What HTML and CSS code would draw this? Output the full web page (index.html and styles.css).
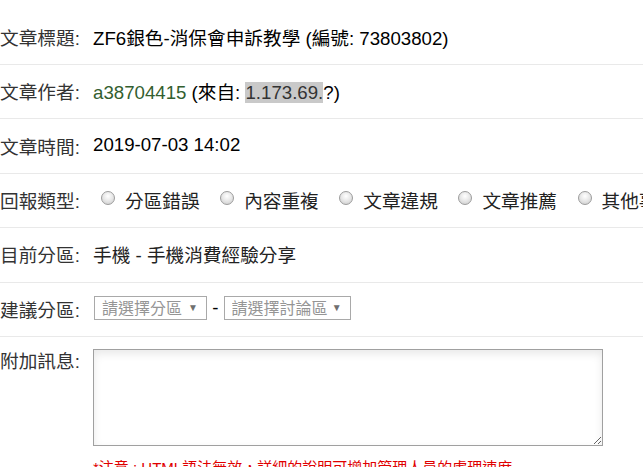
FILE: index.html
```html
<!DOCTYPE html>
<html lang="zh-Hant">
<head>
<meta charset="utf-8">
<title>檢舉文章</title>
<link rel="stylesheet" href="styles.css">
</head>
<body>
<div class="form">
  <div class="row">
    <span class="label">文章標題:</span>
    <span class="value title">ZF6銀色-消保會申訴教學 (編號: 73803802)</span>
  </div>
  <div class="row">
    <span class="label">文章作者:</span>
    <span class="value"><span class="author">a38704415</span> (來自: <span class="ip">1.173.69.</span>?)</span>
  </div>
  <div class="row">
    <span class="label">文章時間:</span>
    <span class="value">2019-07-03 14:02</span>
  </div>
  <div class="row">
    <span class="label">回報類型:</span>
    <span class="options">
      <label class="opt"><input type="radio" name="type"><span>分區錯誤</span></label>
      <label class="opt"><input type="radio" name="type"><span>內容重複</span></label>
      <label class="opt"><input type="radio" name="type"><span>文章違規</span></label>
      <label class="opt"><input type="radio" name="type"><span>文章推薦</span></label>
      <label class="opt"><input type="radio" name="type"><span>其他事項</span></label>
    </span>
  </div>
  <div class="row">
    <span class="label">目前分區:</span>
    <span class="value dim">手機 - 手機消費經驗分享</span>
  </div>
  <div class="row">
    <span class="label">建議分區:</span>
    <span class="value selects"><span class="sel"><select class="sel-board"><option>請選擇分區</option></select></span> - <span class="sel"><select class="sel-forum"><option>請選擇討論區</option></select></span></span>
  </div>
  <div class="row row-msg">
    <span class="label">附加訊息:</span>
    <div class="msg">
      <textarea class="msg-box"></textarea>
      <p class="note">*注意 : HTML語法無效，詳細的說明可增加管理人員的處理速度</p>
    </div>
  </div>
</div>
</body>
</html>
```

FILE: styles.css
```css
html {
  overflow: hidden;
}

body {
  margin: 0;
  background: #fff;
  color: #000;
  font-family: "Liberation Sans", "Noto Sans CJK TC", sans-serif;
  font-size: 14pt;
}

.form {
  padding-top: 10.6px;
}

.row {
  display: flex;
  align-items: center;
  height: 53.4px;
  border-bottom: 1px solid #e9e9e9;
  white-space: nowrap;
  overflow: hidden;
}

.label {
  flex: 0 0 93px;
  color: #333;
  margin-top: -2px;
}

.value {
  color: #000;
  margin-top: -2px;
}

.value.dim {
  color: #222;
}

.author {
  color: #335e2f;
}

.ip {
  background: #c9c9c9;
  color: #333;
}

.options {
  display: flex;
  align-items: center;
  margin-top: -2px;
}

.opt {
  display: inline-flex;
  align-items: center;
  margin-right: 12.5px;
  color: #222;
}

.opt input {
  -webkit-appearance: none;
  appearance: none;
  width: 14px;
  height: 14px;
  margin: -2px 10px 0 8px;
  border: 1px solid #9c9c9c;
  border-radius: 50%;
  background: radial-gradient(circle at 50% 35%, #ffffff 0%, #e9e9e9 45%, #c9c9c9 100%);
  box-sizing: border-box;
}

.selects {
  display: inline-flex;
  align-items: center;
  white-space: pre;
}

.sel {
  position: relative;
  display: inline-block;
}

.sel::after {
  content: "▼";
  position: absolute;
  right: 9px;
  top: 6px;
  font-size: 10px;
  color: #6f6f6f;
  pointer-events: none;
}

.sel select {
  -webkit-appearance: none;
  appearance: none;
  display: block;
  height: 24px;
  margin: 0;
  padding: 0 0 0 7px;
  border: 1px solid #a9a9a9;
  border-radius: 0;
  background: #fff;
  color: #959595;
  font-family: "Liberation Sans", "Noto Sans CJK TC", sans-serif;
  font-size: 16px;
  box-sizing: border-box;
}

.sel-board {
  width: 113px;
}

.sel-forum {
  width: 127px;
}

.selects .sel:first-child {
  margin-left: 1px;
}

.row-msg {
  align-items: flex-start;
  height: auto;
  border-bottom: none;
  padding-top: 12px;
  overflow: visible;
}

.row-msg .label {
  line-height: 26px;
}

.row-msg .label,
.row-msg .msg {
  margin-top: 0;
}

.msg {
  display: flex;
  flex-direction: column;
}

.msg-box {
  display: block;
  width: 510px;
  height: 97px;
  margin: 0;
  border: 1px solid #a0a0a0;
  box-sizing: border-box;
  box-shadow: inset 0 4px 8px rgba(0, 0, 0, 0.09);
  background: #fff;
}

.note {
  margin: 10px 0 0;
  color: #e00000;
  font-size: 15px;
}
```
